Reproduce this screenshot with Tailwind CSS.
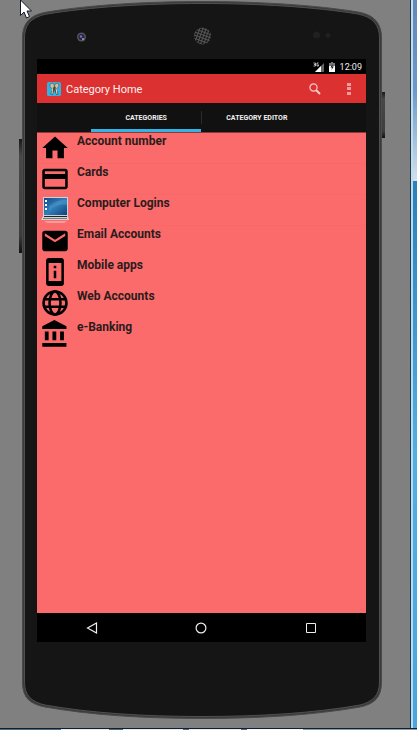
<!DOCTYPE html>
<html lang="en">
<head>
<meta charset="utf-8">
<meta name="viewport" content="width=device-width, initial-scale=1">
<title>Category Home</title>
<script src="https://cdn.jsdelivr.net/npm/@tailwindcss/browser@4"></script>
</head>
<body class="flex min-h-screen flex-col bg-[#808080] font-[Roboto,sans-serif]">
<div class="flex flex-1">
  <main class="relative flex flex-1 flex-col pt-[59px] pr-[44px] pb-[86px] pl-[37px]">
    <!-- Phone body -->
    <svg class="absolute inset-0 h-full w-full" viewBox="0 0 410 728" preserveAspectRatio="none" aria-hidden="true">
      <defs>
        <linearGradient id="side" x1="0" x2="0" y1="0" y2="1"><stop offset="0" stop-color="#191919"/><stop offset=".15" stop-color="#484848"/><stop offset=".85" stop-color="#3d3d3d"/><stop offset="1" stop-color="#101010"/></linearGradient>
        <pattern id="mesh" width="3" height="3" patternUnits="userSpaceOnUse" patternTransform="rotate(20)"><rect width="3" height="3" fill="#555"/><rect width="2" height="2" fill="#181818"/></pattern>
      </defs>
      <rect x="19" y="139" width="4" height="114" fill="url(#side)"/>
      <rect x="381" y="92" width="4" height="46" fill="url(#side)"/>
      <path d="M22.500 38C22.500 24 29 15 47 12C90 5 145 1.500 202 1.500S315 5 358 12C375 15 381.500 24 381.500 38V682C381.500 698 374 704 360 707C315 715 260 718.500 202 718.500S90 715 45 707C30 704 22.500 698 22.500 682Z" fill="#3a3a3a" stroke="#4a4a4a" stroke-width="1"/>
      <path d="M24.500 38C24.500 25 31 17 47 14C90 7 145 3.500 202 3.500S315 7 358 14C373 17 379.500 25 379.500 38V682C379.500 696 372 702 360 705C315 713 260 716.500 202 716.500S90 713 45 705C32 702 24.500 696 24.500 682Z" fill="#151515" stroke="#505050" stroke-width="1"/>
      <circle cx="81.500" cy="37" r="4.500" fill="#55555a"/><circle cx="81.500" cy="37" r="3" fill="#24244c"/><circle cx="81" cy="36.500" r="1.200" fill="#7070bd"/><circle cx="83" cy="39" r="1" fill="#aaa"/>
      <circle cx="202.500" cy="36" r="8.500" fill="url(#mesh)"/>
      <circle cx="316.500" cy="35" r="3.500" fill="#202020"/><circle cx="328" cy="35.500" r="2.500" fill="#202020"/>
    </svg>
    <svg class="absolute top-0 left-[20px] h-[19px] w-[13px]" viewBox="0 0 13 19" aria-hidden="true"><path d="M.5 0V15.500L4 12L6.500 18L9.500 16.500L7 11H11.500Z" fill="#fff" stroke="#15152c"/></svg>

    <div class="relative flex flex-1 flex-col bg-[#fc6b6b]">
      <div class="flex h-[15px] items-center justify-end bg-black pr-[4px] text-[9px] leading-[15px] text-[#eee]">
        <svg class="mr-[5px] h-[10px] w-[11px]" viewBox="0 0 11 10" aria-label="3G signal"><path d="M11 1V10H2Z" fill="#666"/><path d="M8 4V10H2Z" fill="#fff"/><path d="M.5 1H2.500V4H.5M1 2.500H2.500M5.500 1H4V4H5.500V2.500" fill="none" stroke="#ddd" stroke-width=".8"/></svg>
        <svg class="mr-[5px] h-[10px] w-[6px]" viewBox="0 0 6 10" aria-label="Battery charging"><path d="M2 0H4V1H6V5H0V1H2Z" fill="#777"/><path d="M0 4H6V10H0Z" fill="#fff"/><path d="M3.500 2L1.500 5.500H3L2.500 8L4.800 4.500H3.300Z" fill="#111"/></svg>
        <span class="pt-px">12:09</span>
      </div>
      <header class="flex h-[29px] items-center bg-[#db3131] pr-[14px] pl-[10px]">
        <svg class="mr-[5px] h-[14px] w-[14px]" viewBox="0 0 14 14" aria-hidden="true"><rect width="14" height="14" rx="1.500" fill="#2eb3e6"/><path d="M7 4L10.500 12.500M7.500 4L4.500 12.500" stroke="#514a3e" stroke-width="2.400"/><path d="M3 2L6 1L7.500 4L5.500 7L3 5ZM8 2L11 1L12 4L9.500 7L7.500 4Z" fill="#c9c0a8" stroke="#66604e" stroke-width=".7"/><path d="M5.500 6.500L5 12M9 6.500L10 12" stroke="#e5dfcb"/></svg>
        <h1 class="pt-[2px] text-[11px] leading-[16px] text-[#fff0f0]">Category Home</h1>
        <button class="mr-[25px] ml-auto h-[12px] w-[12px]" aria-label="Search"><svg viewBox="0 0 12 12" fill="none" stroke="#f5cbcb"><circle cx="4.500" cy="4.500" r="3.600" stroke-width="1.200"/><path d="M7 7L11 11" stroke-width="1.900"/></svg></button>
        <button class="h-[12px] w-[6px]" aria-label="More options"><svg viewBox="0 0 6 12" fill="#ee9d9d"><path d="M1 0H5V3H1ZM1 4H5V7H1ZM1 9H5V12H1Z"/></svg></button>
      </header>
      <nav class="flex h-[30px] items-stretch justify-center border-b border-[#8b3a3a] bg-[#111] text-[7px] font-bold text-[#f2f2f2]">
        <a href="#categories" aria-current="page" class="flex w-1/3 items-center justify-center border-b-[3px] border-[#34b3e4] pt-[4px]">CATEGORIES</a>
        <span class="my-[8px] w-px bg-[#2b2b2b]"></span>
        <a href="#editor" class="flex w-1/3 items-center justify-center pt-px">CATEGORY EDITOR</a>
      </nav>
      <ul id="categories" class="flex-1 text-[12px] leading-[16px] font-bold text-[#2b1c1c]">
        <li class="flex h-[31px] items-start border-b border-[#f86868] pl-[4px]"><svg class="mt-[1px] mr-[8px] h-[28px] w-[28px]" viewBox="1 1 22 22" aria-hidden="true"><path d="M10 20V14H14V20H19V12H22L12 3L2 12H5V20Z"/></svg><span>Account number</span></li>
        <li class="flex h-[31px] items-start border-b border-[#f86868] pl-[4px]"><svg class="mt-[1px] mr-[8px] h-[28px] w-[28px]" viewBox="1 1 22 22" aria-hidden="true"><path d="M20 4H4C2.890 4 2 4.890 2 6V18C2 19.110 2.890 20 4 20H20C21.110 20 22 19.110 22 18V6C22 4.890 21.110 4 20 4ZM20 18H4V12H20ZM20 8H4V6H20Z"/></svg><span>Cards</span></li>
        <li class="flex h-[31px] items-start border-b border-[#f86868] pl-[4px]"><svg class="mt-[1px] mr-[8px] h-[28px] w-[28px]" viewBox="0 0 28 28" aria-hidden="true"><defs><linearGradient id="lcd" x2="1" y2="1"><stop stop-color="#164887"/><stop offset=".5" stop-color="#2f7fb9"/><stop offset="1" stop-color="#123f77"/></linearGradient></defs><path d="M2 1H27V20H2Z" fill="#c6d3dc"/><path d="M3 2H26V19H3Z" fill="url(#lcd)"/><path d="M8 10Q16 3 26 4V9Q16 7 8 15Z" fill="#67acd4" opacity=".35"/><path d="M4 4H6V6H4ZM4 8H6V10H4ZM4 12H6V14H4Z" fill="#fff"/><path d="M2 20H27L28 24H0Z" fill="#d2d2d2"/><path d="M3 20.500H26" stroke="#222" stroke-width="1"/><path d="M2 22.500H26" stroke="#555" stroke-width=".7"/><path d="M3 25H26L23 27H6Z" fill="#ff9d9d"/></svg><span>Computer Logins</span></li>
        <li class="flex h-[31px] items-start pl-[4px]"><svg class="mt-[1px] mr-[8px] h-[28px] w-[28px]" viewBox="1 1 22 22" aria-hidden="true"><path d="M20 4H4C2.900 4 2 4.900 2 6V18C2 19.100 2.900 20 4 20H20C21.100 20 22 19.100 22 18V6C22 4.900 21.100 4 20 4ZM20 8L12 13L4 8V6L12 11L20 6Z"/></svg><span>Email Accounts</span></li>
        <li class="flex h-[31px] items-start pl-[4px]"><svg class="mt-[1px] mr-[8px] h-[28px] w-[28px]" viewBox="1 1 22 22" aria-hidden="true"><path d="M11 7H13V9H11ZM11 11H13V17H11ZM17 1H7C5.900 1 5 1.900 5 3V21C5 22.100 5.900 23 7 23H17C18.100 23 19 22.100 19 21V3C19 1.900 18.100 1 17 1ZM17 19H7V5H17Z" fill-rule="evenodd"/></svg><span>Mobile apps</span></li>
        <li class="flex h-[31px] items-start pl-[4px]"><svg class="mt-[1px] mr-[8px] h-[28px] w-[28px]" viewBox="1 1 22 22" fill="none" stroke="#000" stroke-width="2" aria-hidden="true"><circle cx="12" cy="12" r="9"/><ellipse cx="12" cy="12" rx="4.300" ry="9"/><path d="M4 9H20M4 15H20"/></svg><span>Web Accounts</span></li>
        <li class="flex h-[31px] items-start pl-[4px]"><svg class="mt-[1px] mr-[8px] h-[28px] w-[28px]" viewBox="1 1 22 22" aria-hidden="true"><path d="M4 10V17H7V10ZM10 10V17H13V10ZM2 22H21V19H2ZM16 10V17H19V10ZM11.500 1L2 6V8H21V6Z"/></svg><span>e-Banking</span></li>
      </ul>
      <footer class="grid h-[29px] grid-cols-3 bg-black">
        <button class="flex items-center justify-center" aria-label="Back"><svg class="h-[12px] w-[12px]" viewBox="0 0 12 12" fill="none" stroke="#eee" stroke-width="1.200"><path d="M10.500 1V11L1.500 6Z"/></svg></button>
        <button class="flex items-center justify-center" aria-label="Home"><svg class="h-[12px] w-[12px]" viewBox="0 0 12 12" fill="none" stroke="#eee" stroke-width="1.200"><circle cx="6" cy="6" r="4.900"/></svg></button>
        <button class="flex items-center justify-center" aria-label="Recent apps"><svg class="h-[10px] w-[10px]" viewBox="0 0 10 10" fill="none" stroke="#eee"><path d="M.5 .5H9.500V9.500H.5Z"/></svg></button>
      </footer>
    </div>
  </main>
  <div class="flex w-[7px] flex-col border-l border-[#1d3d55]">
    <div class="h-[181px] border-l-2 border-[#c5dbe8] bg-linear-to-b from-[#6388ba] via-[#6a99cb] to-[#d3e1ee]"></div>
    <div class="flex-1 border-l-2 border-[#b5dcf0] bg-linear-to-b from-[#2c7fb8] via-[#55aee0] to-[#4ba5dc]"></div>
  </div>
</div>
<div class="h-px bg-[#10202e]"></div>
<div class="flex h-px bg-[#8a9ba8]"><span class="w-[61px] bg-[#53697d]"></span><span class="w-[48px] bg-[#e4e9ec]"></span><span class="w-[14px] bg-[#53697d]"></span><span class="w-[60px] bg-[#e4e9ec]"></span><span class="w-[6px] bg-[#53697d]"></span><span class="w-[52px] bg-[#e4e9ec]"></span><span class="w-[6px] bg-[#53697d]"></span><span class="w-[56px] bg-[#f5f7f8]"></span></div>
</body>
</html>
